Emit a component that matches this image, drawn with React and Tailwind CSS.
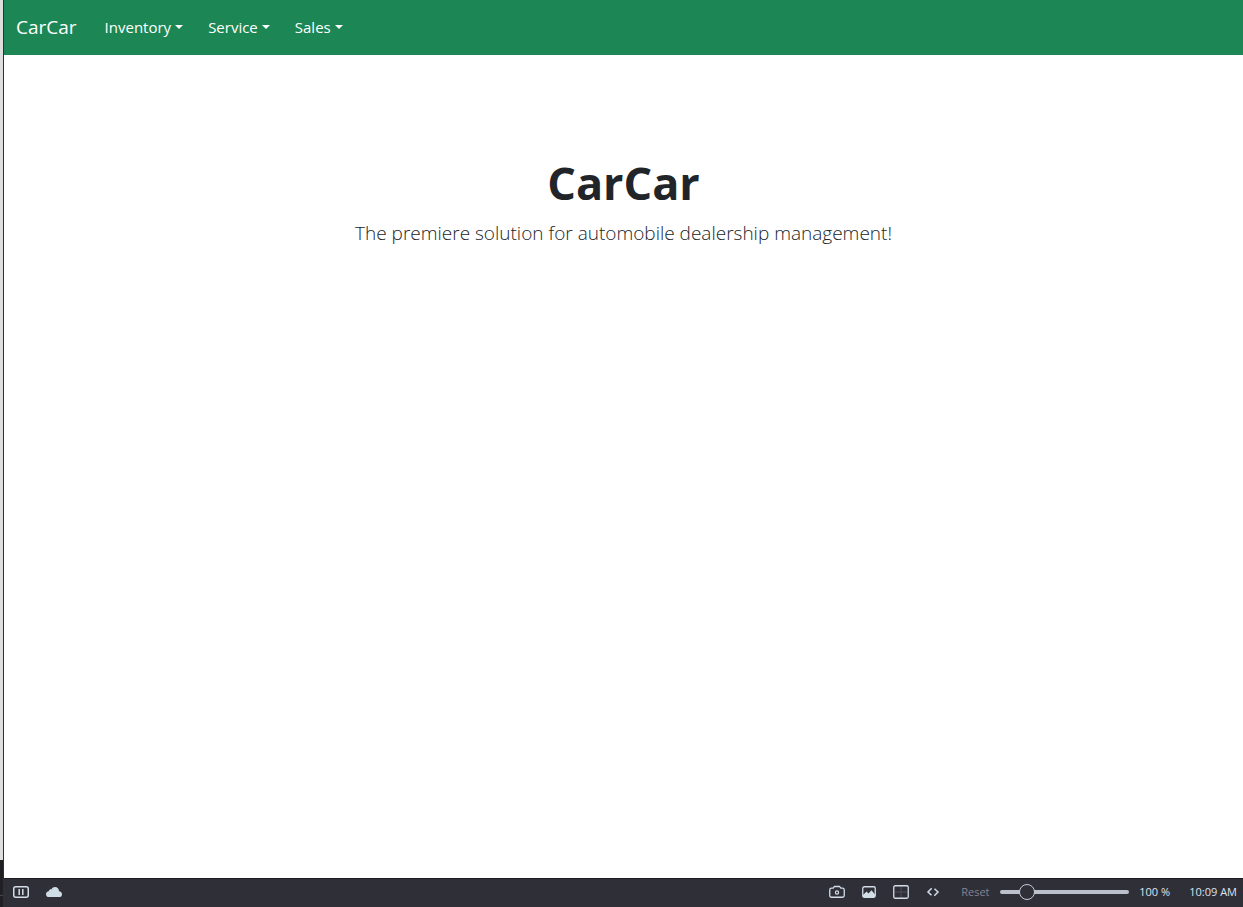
import { useState } from "react";

const menus = ["Inventory", "Service", "Sales"];

function NavMenu({ label }) {
  return (
    <button type="button" aria-haspopup="menu" className="flex items-center gap-1 text-[15px] leading-6 text-white">
      {label}
      <span className="border-x-4 border-t-4 border-x-transparent border-t-white" />
    </button>
  );
}

function Navbar() {
  return (
    <nav className="flex h-[55px] items-center bg-[#1c8754] px-3 pb-px">
      <a href="#home" className="mr-7 text-[19px] leading-7 text-white">CarCar</a>
      <div className="flex gap-[25px]">
        {menus.map((label) => (
          <NavMenu key={label} label={label} />
        ))}
      </div>
    </nav>
  );
}

function StatusButton({ label, children }) {
  return (
    <button type="button" aria-label={label} className="flex h-4 w-4 shrink-0 items-center justify-center">
      <svg
        viewBox="0 0 16 16"
        className="h-4 w-4"
        fill="none"
        stroke="#d2dde8"
        strokeWidth="1.5"
        strokeLinejoin="round"
      >
        {children}
      </svg>
    </button>
  );
}

function StatusBar() {
  const [zoom, setZoom] = useState(100);
  return (
    <footer className="flex h-[29px] items-center border-t border-[#1c1c24] bg-[#2f2f38] pr-1.5 pb-0.5 pl-[9px] text-[11px] text-[#dde3ee]">
      <div className="flex gap-[17px]">
        <StatusButton label="Pause">
          <rect x="0.75" y="2.75" width="14.5" height="10.5" rx="2" />
          <path d="M6.200 5v6M9.800 5v6" />
        </StatusButton>
        <StatusButton label="Sync">
          <path
            d="M3.2 13A3 3 0 0 1 0 10.2C0 8.500 1.200 7.300 2.800 7.200C3.200 5.900 4.200 5.200 5.400 5.400C6.200 3.800 7.500 3 9 3C11.400 3 13 4.700 13.100 7.200C14.800 7.400 16 8.500 16 10.200A2.800 2.800 0 0 1 13.200 13Z"
            fill="#cfdde7"
            stroke="none"
          />
        </StatusButton>
      </div>
      <div className="ml-auto flex items-center">
        <div className="flex gap-4">
          <StatusButton label="Capture page">
            <path
              d="M2.500 4.200H4.200L5.300 2.500H10.700L11.800 4.200H13.500Q15.250 4.200 15.250 6V11.500Q15.250 13.250 13.500 13.250H2.500Q.75 13.250 .75 11.500V6Q.75 4.200 2.500 4.200Z"
              strokeWidth="1.300"
            />
            <circle cx="8" cy="8.500" r="1.600" strokeWidth="1.200" />
          </StatusButton>
          <StatusButton label="Toggle images">
            <rect x="1.750" y="2.750" width="12.500" height="10.500" rx="1.500" strokeWidth="1.300" />
            <path d="M2 13V11L5.500 7.500L7.500 9.500L10.500 6.200L14 10.500V13Z" fill="#d2dde8" stroke="none" />
          </StatusButton>
          <StatusButton label="Page tiling">
            <path d="M8 2V14M2 8H14" stroke="#50505a" strokeWidth="1" />
            <rect x="0.750" y="1.750" width="14.500" height="12.500" rx="1.500" strokeWidth="1.300" />
          </StatusButton>
          <StatusButton label="Page actions">
            <path d="M6.700 4.300L3 8L6.500 11.200M9.500 4.800L13 8L9.300 11.700" strokeLinejoin="miter" />
          </StatusButton>
        </div>
        <button type="button" onClick={() => setZoom(100)} className="ml-5 w-8 text-left text-[#858292]">
          Reset
        </button>
        <input
          type="range"
          aria-label="Page zoom"
          min="20"
          max="500"
          value={zoom}
          onChange={(e) => setZoom(Number(e.target.value))}
          className="ml-[7px] h-4 w-[129px] appearance-none bg-transparent [&::-webkit-slider-runnable-track]:h-1 [&::-webkit-slider-runnable-track]:rounded-sm [&::-webkit-slider-runnable-track]:bg-[#bcc0cb] [&::-webkit-slider-thumb]:-mt-1.5 [&::-webkit-slider-thumb]:h-4 [&::-webkit-slider-thumb]:w-4 [&::-webkit-slider-thumb]:appearance-none [&::-webkit-slider-thumb]:rounded-full [&::-webkit-slider-thumb]:border [&::-webkit-slider-thumb]:border-[#c6cbd6] [&::-webkit-slider-thumb]:bg-[#2f2f38]"
        />
        <span className="ml-2.5 w-[50px] whitespace-nowrap">{zoom} %</span>
        <time className="whitespace-nowrap">10:09 AM</time>
      </div>
    </footer>
  );
}

export default function App() {
  return (
    <div className="flex min-h-screen bg-white font-['Open_Sans','Noto_Sans',sans-serif]">
      <div className="flex w-1 shrink-0 flex-col border-r border-[#303034]">
        <div className="flex-1 bg-[#dededf]" />
        <div className="h-[35px] bg-[#202024]" />
        <div className="h-3 border-t border-[#45454c] bg-[#202024]" />
      </div>
      <div className="flex min-w-0 flex-1 flex-col">
        <Navbar />
        <main className="flex-1 px-4 pt-[99px] text-center text-[#212529]">
          <h1 className="text-[45px] leading-[58px] font-bold">CarCar</h1>
          <p className="mt-1.5 text-[19px] leading-[30px] font-light">
            The premiere solution for automobile dealership management!
          </p>
        </main>
        <StatusBar />
      </div>
    </div>
  );
}
